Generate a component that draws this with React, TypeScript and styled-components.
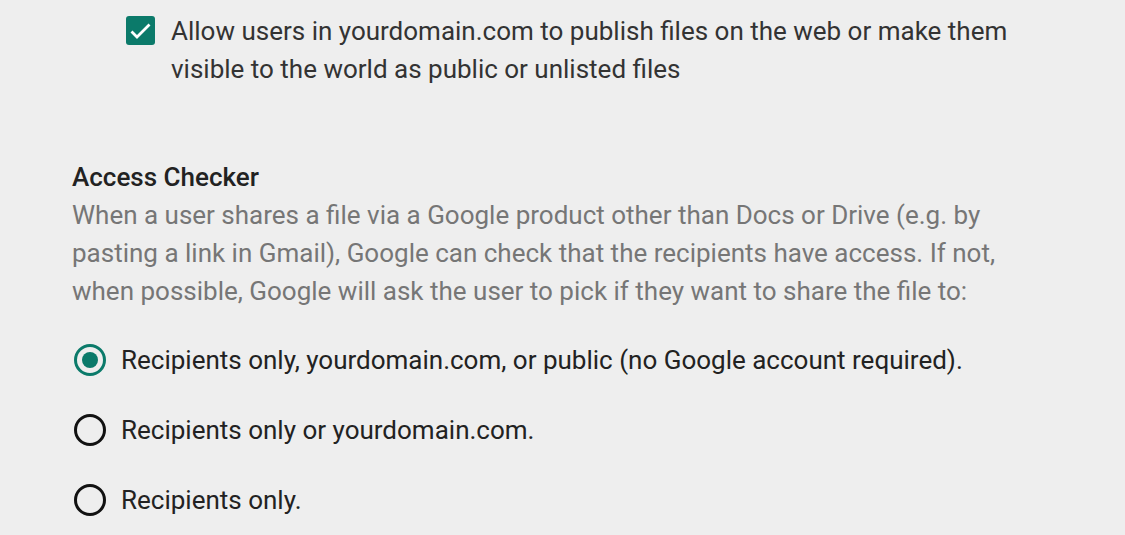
import React from 'react';
import styled, { createGlobalStyle } from 'styled-components';

const GlobalStyle = createGlobalStyle`
  html, body {
    margin: 0;
    padding: 0;
    background: #eeeeee;
  }
  body {
    font-family: Roboto, 'Liberation Sans', sans-serif;
    -webkit-font-smoothing: antialiased;
  }
`;

const options = [
  'Recipients only, yourdomain.com, or public (no Google account required).',
  'Recipients only or yourdomain.com.',
  'Recipients only.',
];

const App = () => {
  const [selected, setSelected] = React.useState(0);
  const [allowPublish, setAllowPublish] = React.useState(true);

  return (
    <>
      <GlobalStyle />
      <Settings.Page>
        <Settings.CheckRow onClick={() => setAllowPublish(!allowPublish)}>
          <Settings.Checkbox checked={allowPublish}>
            {allowPublish && (
              <svg width="29" height="29" viewBox="0 0 29 29">
                <path
                  d="M5.5 15.5 L11 21 L23.5 8.5"
                  fill="none"
                  stroke="#ffffff"
                  strokeWidth="2.8"
                />
              </svg>
            )}
          </Settings.Checkbox>
          <Settings.CheckLabel>
            Allow users in yourdomain.com to publish files on the web or make them
            visible to the world as public or unlisted files
          </Settings.CheckLabel>
        </Settings.CheckRow>

        <Settings.Section>
          <Settings.Heading>Access Checker</Settings.Heading>
          <Settings.Description>
            When a user shares a file via a Google product other than Docs or Drive (e.g. by
            pasting a link in Gmail), Google can check that the recipients have access. If not,
            when possible, Google will ask the user to pick if they want to share the file to:
          </Settings.Description>
          <Settings.RadioList>
            {options.map((label, i) => (
              <Settings.RadioRow key={label} onClick={() => setSelected(i)}>
                <Settings.Radio checked={selected === i} />
                <Settings.RadioLabel>{label}</Settings.RadioLabel>
              </Settings.RadioRow>
            ))}
          </Settings.RadioList>
        </Settings.Section>
      </Settings.Page>
    </>
  );
};

export default App;

class Settings {
  static Page = styled.div`
    width: 1125px;
    height: 535px;
    box-sizing: border-box;
    padding: 12px 0 0 72px;
    overflow: hidden;
  `;
  static CheckRow = styled.div`
    display: flex;
    align-items: flex-start;
    gap: 16px;
    padding-left: 54px;
    cursor: pointer;
  `;
  static Checkbox = styled.div<{ checked: boolean }>`
    flex: none;
    width: 29px;
    height: 29px;
    margin-top: 4px;
    box-sizing: border-box;
    border-radius: 3px;
    background: ${(p) => (p.checked ? '#0b7a6a' : 'transparent')};
    border: ${(p) => (p.checked ? 'none' : '3px solid #222')};
    svg {
      display: block;
    }
  `;
  static CheckLabel = styled.div`
    font-size: 26px;
    line-height: 38px;
    color: #333333;
    width: 860px;
  `;
  static Section = styled.section`
    margin-top: 70px;
  `;
  static Heading = styled.h2`
    margin: 0;
    font-size: 26px;
    line-height: 38px;
    font-weight: 500;
    color: #222222;
  `;
  static Description = styled.p`
    margin: 0;
    font-size: 26px;
    line-height: 38px;
    color: #767676;
    width: 960px;
  `;
  static RadioList = styled.div`
    display: flex;
    flex-direction: column;
    gap: 32px;
    margin-top: 31px;
  `;
  static RadioRow = styled.div`
    display: flex;
    align-items: center;
    gap: 15px;
    padding-left: 2px;
    cursor: pointer;
  `;
  static Radio = styled.div<{ checked: boolean }>`
    flex: none;
    width: 32px;
    height: 32px;
    box-sizing: border-box;
    border-radius: 50%;
    border: 3px solid ${(p) => (p.checked ? '#0b7a6a' : '#111111')};
    position: relative;
    &::after {
      content: '';
      display: ${(p) => (p.checked ? 'block' : 'none')};
      position: absolute;
      inset: 5px;
      border-radius: 50%;
      background: #0b7a6a;
    }
  `;
  static RadioLabel = styled.span`
    font-size: 26px;
    line-height: 38px;
    color: #222222;
  `;
}
